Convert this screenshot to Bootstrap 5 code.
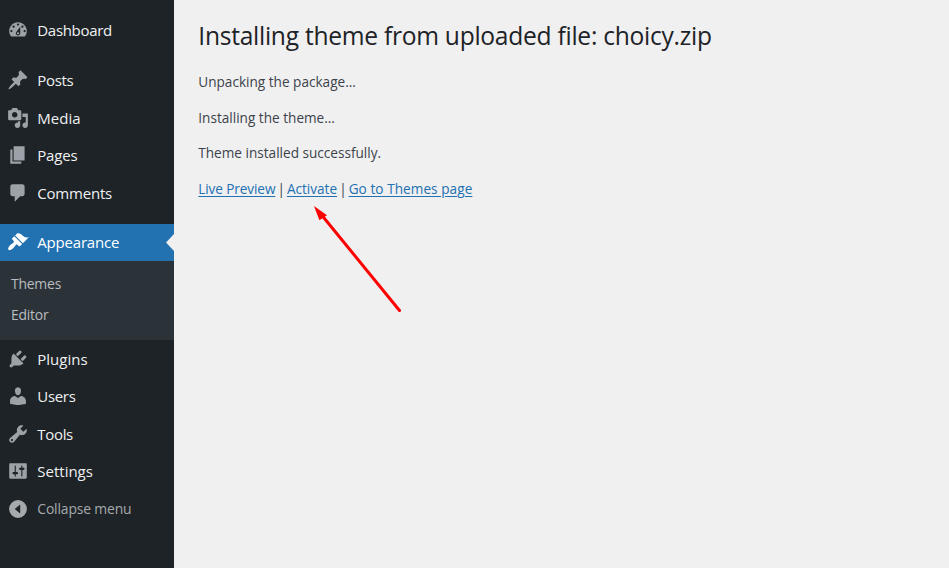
<!DOCTYPE html>
<html lang="en">
<head>
<meta charset="utf-8">
<meta name="viewport" content="width=device-width, initial-scale=1">
<title>Installing theme</title>
<link href="https://cdn.jsdelivr.net/npm/bootstrap@5.3.0/dist/css/bootstrap.min.css" rel="stylesheet">
<style>
body{font-family:"Open Sans","Noto Sans",sans-serif;background:#f0f0f1;color:#3c434a;font-size:13.6px;height:568px;overflow:hidden}
.side-menu{width:174px;background:#1d2327;padding-top:11.4px}
.side-menu .nav-link{height:37.5px;padding:0 0 0 7px;color:#f0f0f1;font-size:15px;line-height:20px;gap:8.3px;letter-spacing:-.2px}
.side-menu .snug{letter-spacing:-.32px}
.side-menu .wide{letter-spacing:0}
.side-menu svg{width:22px;height:22px;fill:#9ca2a7;flex:none}
.side-menu .current{background:#2271b1;color:#fff;height:37px}
.side-menu .current svg{fill:#fff}
.notch{right:0;top:10px;width:8px;height:17px;background:#f0f0f1;clip-path:polygon(100% 0,0 50%,100% 100%)}
.group-gap{margin-top:12.5px}
.sub-menu{background:#2c3338;height:79px;padding:7.5px 0 0 11px}
.sub-menu a{color:#b9bdc1;font-size:13.9px;line-height:31px;text-decoration:none;letter-spacing:-.2px}
.side-menu .fold{color:#a7aaad;font-size:13.9px;letter-spacing:-.15px}
.side-menu .fold svg{fill:#a7aaad}
.page-body{padding:20px 0 0 24.3px}
.page-body h1{font-size:24.6px;line-height:31px;color:#1d2327;font-weight:400;letter-spacing:-.27px;margin-bottom:21px}
.page-body p{line-height:20px;margin-bottom:15.7px}
.page-body a{color:#2271b1;text-underline-offset:2px;word-spacing:0;letter-spacing:0}
.link-row{word-spacing:-1.2px;letter-spacing:-.2px}
.link-row .preview{letter-spacing:-.1px}
.link-row .themes{letter-spacing:.06px}
.pointer{left:310px;top:200px}
</style>
<script src="https://cdn.jsdelivr.net/npm/bootstrap@5.3.0/dist/js/bootstrap.bundle.min.js"></script>
</head>
<body class="d-flex">
<nav class="side-menu nav flex-column flex-nowrap flex-shrink-0">
<a class="nav-link d-flex align-items-center snug" href="#"><svg viewBox="0 0 20 20"><path fill-rule="evenodd" d="M3.76 16h12.48c1.1-1.37 1.76-3.11 1.76-5 0-4.42-3.58-8-8-8s-8 3.58-8 8c0 1.89.66 3.63 1.76 5zM10 4c.55 0 1 .45 1 1s-.45 1-1 1-1-.45-1-1 .45-1 1-1zM6 6c.55 0 1 .45 1 1s-.45 1-1 1-1-.45-1-1 .45-1 1-1zm8 0c.55 0 1 .45 1 1s-.45 1-1 1-1-.45-1-1 .45-1 1-1zm-5.37 5.55L12 7v6c0 1.1-.9 2-2 2s-2-.9-2-2c0-.57.24-1.08.63-1.45zM4 10c.55 0 1 .45 1 1s-.45 1-1 1-1-.45-1-1 .45-1 1-1zm12 0c.55 0 1 .45 1 1s-.45 1-1 1-1-.45-1-1 .45-1 1-1zm-5 3c0-.55-.45-1-1-1s-1 .45-1 1 .45 1 1 1 1-.45 1-1z"/></svg><span>Dashboard</span></a>
<a class="nav-link d-flex align-items-center group-gap snug" href="#"><svg viewBox="0 0 20 20"><path d="M10.44 3.02l1.82-1.82 6.36 6.35-1.83 1.82c-1.05-.68-2.48-.57-3.41.36l-.75.75c-.92.93-1.04 2.35-.35 3.41l-1.83 1.82-2.41-2.41-2.8 2.79c-.42.42-3.38 2.71-3.8 2.29s1.86-3.39 2.28-3.81l2.79-2.79L4.1 9.36l1.83-1.82c1.05.69 2.48.57 3.4-.36l.75-.75c.93-.92 1.05-2.35.36-3.41z"/></svg><span>Posts</span></a>
<a class="nav-link d-flex align-items-center wide" href="#"><svg viewBox="0 0 20 20"><path fill-rule="evenodd" d="M13 11V4c0-.55-.45-1-1-1h-1.67L9 1H5L3.67 3H2c-.55 0-1 .45-1 1v7c0 .55.45 1 1 1h10c.55 0 1-.45 1-1zM7 4.5c1.38 0 2.5 1.12 2.5 2.5S8.38 9.5 7 9.5 4.5 8.38 4.5 7 5.62 4.5 7 4.5zM14 6h5v10.5c0 1.38-1.12 2.5-2.5 2.5S14 17.88 14 16.5s1.12-2.5 2.5-2.5c.17 0 .34.02.5.05V9h-3V6zm-4 8.05V13h2v3.5c0 1.38-1.12 2.5-2.5 2.5S7 17.88 7 16.5 8.12 14 9.5 14c.17 0 .34.02.5.05z"/></svg><span>Media</span></a>
<a class="nav-link d-flex align-items-center" href="#"><svg viewBox="0 0 20 20"><path d="M6 15V2h10v13H6zm-1 1h8v2H3V5h2v11z"/></svg><span>Pages</span></a>
<a class="nav-link d-flex align-items-center" href="#"><svg viewBox="0 0 20 20"><path d="M5 2h9c1.1 0 2 .9 2 2v7c0 1.1-.9 2-2 2h-2l-5 5v-5H5c-1.1 0-2-.9-2-2V4c0-1.1.9-2 2-2z"/></svg><span>Comments</span></a>
<a class="nav-link current d-flex align-items-center position-relative group-gap" href="#"><svg viewBox="0 0 20 20"><path d="M14.48 11.06L7.41 3.99l1.5-1.5c.5-.56 2.3-.47 3.51.32 1.21.8 1.43 1.28 2.91 2.1 1.18.64 2.45 1.26 4.45.85zm-.71.71L6.7 4.7 4.93 6.47c-.39.39-.39 1.02 0 1.41l1.06 1.06c.39.39.39 1.03 0 1.42-.6.6-1.43 1.11-2.21 1.69-.35.26-.7.53-1.01.84C1.43 14.23.4 16.08 1.4 17.07c.99 1 2.84-.03 4.18-1.36.31-.31.58-.66.85-1.02.57-.78 1.08-1.61 1.69-2.21.39-.39 1.02-.39 1.41 0l1.06 1.06c.39.39 1.02.39 1.41 0z"/></svg><span>Appearance</span><i class="notch position-absolute"></i></a>
<div class="sub-menu d-flex flex-column"><a href="#">Themes</a><a href="#">Editor</a></div>
<a class="nav-link d-flex align-items-center wide" href="#"><svg viewBox="0 0 20 20"><path d="M13.11 4.36L9.87 7.6 8 5.73l3.24-3.24c.35-.34 1.05-.2 1.56.32.52.51.66 1.21.31 1.55zm-8 1.77l.91-1.12 9.01 9.01-1.19.84c-.71.71-2.63 1.16-3.82 1.16H6.14L4.9 17.26c-.59.59-1.54.59-2.12 0-.59-.58-.59-1.53 0-2.12l1.24-1.24v-3.88c0-1.13.4-3.19 1.09-3.89zm7.26 3.97l3.24-3.24c.34-.35 1.04-.21 1.55.31.52.51.66 1.21.31 1.55l-3.24 3.25z"/></svg><span>Plugins</span></a>
<a class="nav-link d-flex align-items-center snug" href="#"><svg viewBox="0 0 20 20"><path d="M10 9.25c-2.27 0-2.73-3.44-2.73-3.44C7 4.02 7.82 2 9.97 2c2.16 0 2.98 2.02 2.71 3.81 0 0-.41 3.44-2.68 3.44zm0 2.57L12.72 10c2.39 0 4.52 2.33 4.52 4.53v2.49s-3.65 1.13-7.24 1.13c-3.65 0-7.24-1.13-7.24-1.13v-2.49c0-2.25 1.94-4.48 4.47-4.48z"/></svg><span>Users</span></a>
<a class="nav-link d-flex align-items-center snug" href="#"><svg viewBox="0 0 20 20"><path fill-rule="evenodd" d="M16.68 9.77c-1.34 1.34-3.3 1.67-4.95.99l-5.41 6.52c-.99.99-2.59.99-3.58 0s-.99-2.59 0-3.57l6.52-5.42c-.68-1.65-.35-3.61.99-4.95 1.28-1.28 3.12-1.62 4.72-1.06l-2.89 2.89 2.82 2.82 2.86-2.87c.53 1.58.18 3.39-1.08 4.65zM3.81 16.21c.4.39 1.04.39 1.43 0 .4-.4.4-1.04 0-1.43-.39-.4-1.03-.4-1.43 0-.39.39-.39 1.03 0 1.43z"/></svg><span>Tools</span></a>
<a class="nav-link d-flex align-items-center wide" href="#"><svg viewBox="0 0 20 20"><path fill-rule="evenodd" d="M18 16V4c0-.55-.45-1-1-1H3c-.55 0-1 .45-1 1v12c0 .55.45 1 1 1h14c.55 0 1-.45 1-1zM8 11h1c.55 0 1 .45 1 1s-.45 1-1 1H8v1.5c0 .28-.22.5-.5.5s-.5-.22-.5-.5V13H6c-.55 0-1-.45-1-1s.45-1 1-1h1V5.5c0-.28.22-.5.5-.5s.5.22.5.5V11zm5-2h-1c-.55 0-1-.45-1-1s.45-1 1-1h1V5.5c0-.28.22-.5.5-.5s.5.22.5.5V7h1c.55 0 1 .45 1 1s-.45 1-1 1h-1v5.5c0 .28-.22.5-.5.5s-.5-.22-.5-.5V9z"/></svg><span>Settings</span></a>
<a class="nav-link fold d-flex align-items-center" href="#"><svg viewBox="0 0 20 20"><path fill-rule="evenodd" d="M10 1.9a8.1 8.1 0 1 0 0 16.2 8.1 8.1 0 0 0 0-16.2zM12 6v8l-5-4z"/></svg><span>Collapse menu</span></a>
</nav>
<main class="page-body flex-grow-1">
<h1>Installing theme from uploaded file: choicy.zip</h1>
<p>Unpacking the package…</p>
<p>Installing the theme…</p>
<p>Theme installed successfully.</p>
<p class="link-row"><a class="preview" href="#">Live Preview</a> | <a href="#">Activate</a> | <a class="themes" href="#">Go to Themes page</a></p>
</main>
<svg class="pointer position-absolute" width="100" height="120" viewBox="310 200 100 120"><path d="M320 213L399.5 310.5" stroke="#f00" stroke-width="3" stroke-linecap="round"/><path d="M314 206l13 9.2-7.6 5z" fill="#f00"/></svg>
</body>
</html>
